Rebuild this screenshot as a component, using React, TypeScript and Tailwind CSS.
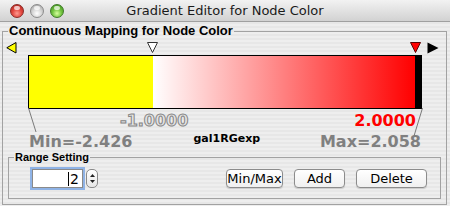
import React from "react";

function Light({ kind }: { kind: "red" | "gray" | "green" }) {
  const cls =
    kind === "red"
      ? "bg-[radial-gradient(circle_at_50%_70%,#ff9a8f_0%,#e2473f_45%,#a8231d_100%)] border-[#8a2a25]"
      : kind === "gray"
      ? "bg-[radial-gradient(circle_at_50%_70%,#ffffff_0%,#d6d6d6_45%,#9d9d9d_100%)] border-[#8c8c8c]"
      : "bg-[radial-gradient(circle_at_50%_70%,#d7ff9d_0%,#71c33f_45%,#3b8a1d_100%)] border-[#3f7a27]";
  return (
    <div className={`relative w-[14px] h-[14px] rounded-full border ${cls}`}>
      <div className="absolute left-[3px] top-[1px] w-[6px] h-[4px] rounded-full bg-white/70" />
    </div>
  );
}

export default function App() {
  return (
    <div className="w-[450px] h-[206px] overflow-hidden font-['DejaVu_Sans',sans-serif] text-black bg-[repeating-linear-gradient(180deg,#eeeeee_0px,#eeeeee_2px,#e7e7e7_2px,#e7e7e7_4px)]">
      {/* Title bar */}
      <div className="h-[22px] grid grid-cols-[1fr_auto_1fr] items-center bg-[linear-gradient(180deg,#f2f2f2,#d2d2d2)] border-b border-[#a0a0a0]">
        <div className="flex gap-[6px] pl-[10px]">
          <Light kind="red" />
          <Light kind="gray" />
          <Light kind="green" />
        </div>
        <div className="text-[13px] leading-[16px] text-[#1a1a1a]">Gradient Editor for Node Color</div>
        <div />
      </div>

      {/* Outer group */}
      <fieldset className="relative ml-[2px] mt-[1px] w-[445px] h-[182px] border border-[#a2a2a2] p-0">
        <legend className="ml-[5px] px-[1px] font-['Liberation_Sans',sans-serif] text-[13px] leading-[16px] font-bold">
          Continuous Mapping for Node Color
        </legend>

        {/* thumbs row */}
        <div className="relative h-[11px] mt-[3px]">
          <svg className="absolute left-[3px] top-0" width="11" height="12" viewBox="0 0 11 12">
            <polygon points="10,0.5 10,11 0.8,5.75" fill="#ffff00" stroke="#000" strokeWidth="1" />
          </svg>
          <svg className="absolute left-[144px] top-0" width="11" height="11" viewBox="0 0 11 11">
            <polygon points="0.5,0.5 10.5,0.5 5.5,10.5" fill="#ffffff" stroke="#333" strokeWidth="1" />
          </svg>
          <svg className="absolute left-[407px] top-0" width="11" height="11" viewBox="0 0 11 11">
            <polygon points="0.5,0.5 10.5,0.5 5.5,10.5" fill="#ff0000" stroke="#5a0000" strokeWidth="1" />
          </svg>
          <svg className="absolute left-[424px] top-0" width="12" height="12" viewBox="0 0 12 12">
            <polygon points="0.5,0.5 11.5,6 0.5,11.5" fill="#000" />
          </svg>
        </div>

        {/* bar + labels */}
        <div className="relative mt-[2px]">
          <div className="ml-[25px] w-[394px] h-[54px] border border-black flex">
            <div className="w-[124px] bg-[#ffff00]" />
            <div className="flex-1 bg-[linear-gradient(90deg,#ffffff,#ff0000)]" />
            <div className="w-[6px] bg-black" />
          </div>

          <div className="relative h-[23px]">
            <span className="absolute left-[117px] top-[2px] text-[16px] leading-[19px] font-bold text-[#e4e4e4] [-webkit-text-stroke:1px_#858585]">
              -1.0000
            </span>
            <span className="absolute right-[30px] top-[2px] text-[16px] leading-[19px] font-bold text-[#ff0000]">
              2.0000
            </span>
          </div>

          <div className="flex items-end h-[17px]">
            <span className="ml-[26px] text-[16px] leading-[17px] font-bold text-[#808080] translate-y-[1px]">Min=-2.426</span>
            <span className="ml-[61px] text-[11px] leading-[14px] font-bold mb-[3px]">gal1RGexp</span>
            <span className="ml-auto mr-[25px] text-[16px] leading-[17px] font-bold text-[#808080] translate-y-[1px]">Max=2.058</span>
          </div>

          <svg className="absolute left-0 top-0 pointer-events-none" width="442" height="95" viewBox="0 0 442 95">
            <line x1="25.5" y1="53" x2="33" y2="77" stroke="#7a7a7a" strokeWidth="1" />
            <line x1="419.5" y1="53" x2="411" y2="81" stroke="#7a7a7a" strokeWidth="1" />
          </svg>
        </div>

        {/* Range Setting group */}
        <fieldset className="ml-[5px] mt-[1px] w-[433px] h-[49px] border border-[#a2a2a2] p-0">
          <legend className="ml-[5px] px-[1px] font-['Liberation_Sans',sans-serif] text-[11px] leading-[14px] font-bold">Range Setting</legend>
          <div className="flex items-center mt-[5px]">
            <div className="ml-[23px] w-[51px] h-[19px] bg-white border border-[#8a8a8a] shadow-[0_0_0_2px_#8fb3e6] flex items-center justify-end pr-[3px]">
              <span className="w-[1px] h-[14px] bg-black mr-[1px]" />
              <span className="text-[14px] leading-[16px]">2</span>
            </div>
            <div className="ml-[3px] w-[12px] h-[19px] rounded-[5px] border border-[#8a8a8a] bg-[linear-gradient(180deg,#ffffff,#e6e6e6)] flex flex-col items-center justify-center gap-[3px]">
              <svg width="5" height="3" viewBox="0 0 5 3"><polygon points="2.5,0 5,3 0,3" fill="#222" /></svg>
              <svg width="5" height="3" viewBox="0 0 5 3"><polygon points="0,0 5,0 2.5,3" fill="#222" /></svg>
            </div>
            <button className="ml-[128px] w-[57px] h-[19px] rounded-[4px] border border-[#8c8c8c] bg-[linear-gradient(180deg,#ffffff,#f0f0f0)] text-[13px] leading-[16px] text-black shadow-[0_1px_1px_rgba(0,0,0,0.15)]">
              Min/Max
            </button>
            <button className="ml-[11px] w-[51px] h-[19px] rounded-[4px] border border-[#8c8c8c] bg-[linear-gradient(180deg,#ffffff,#f0f0f0)] text-[13px] leading-[16px] text-black shadow-[0_1px_1px_rgba(0,0,0,0.15)]">
              Add
            </button>
            <button className="ml-[11px] w-[71px] h-[19px] rounded-[4px] border border-[#8c8c8c] bg-[linear-gradient(180deg,#ffffff,#f0f0f0)] text-[13px] leading-[16px] text-black shadow-[0_1px_1px_rgba(0,0,0,0.15)]">
              Delete
            </button>
          </div>
        </fieldset>
      </fieldset>
    </div>
  );
}
